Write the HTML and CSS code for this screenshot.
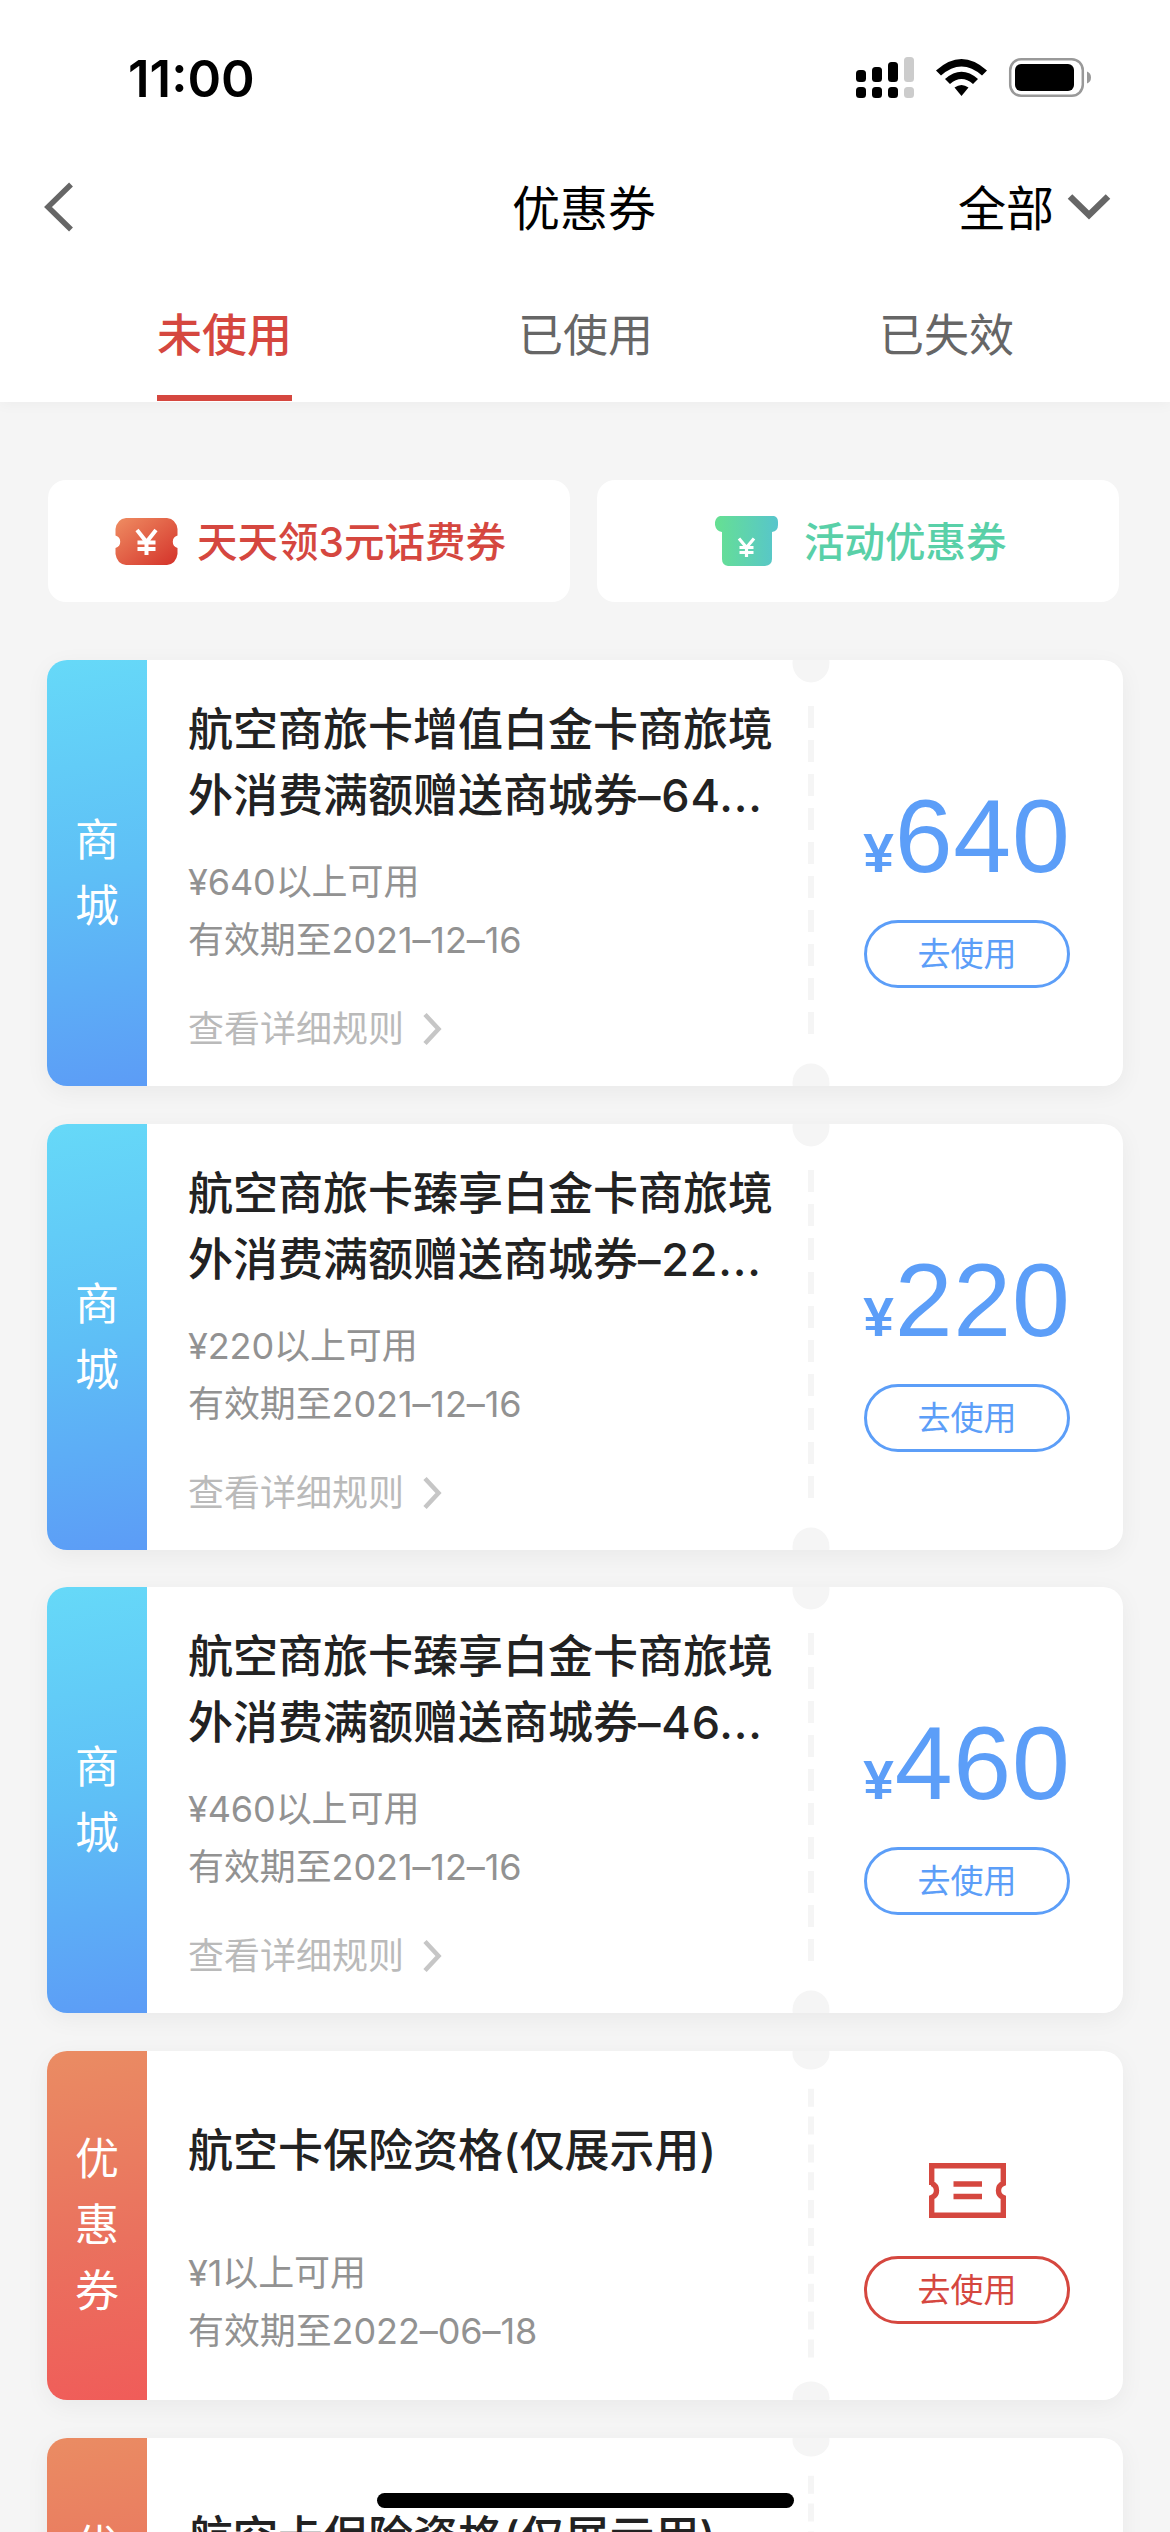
FILE: index.html
```html
<!DOCTYPE html>
<html lang="zh-CN">
<head>
<meta charset="utf-8">
<title>优惠券</title>
<link rel="stylesheet" href="styles.css">
</head>
<body>
<svg class="defs" width="0" height="0" aria-hidden="true">
  <defs>
    <symbol id="perforation" viewBox="0 0 38 426" preserveAspectRatio="none">
      <ellipse cx="19" cy="3" rx="18.5" ry="19.5" />
      <ellipse cx="19" cy="423" rx="18.5" ry="19.5" />
      <path d="M19 46V378" fill="none" stroke="#f5f5f5" stroke-width="6" stroke-dasharray="22 12" />
    </symbol>
    <symbol id="ticket" viewBox="0 0 77 55">
      <path d="M2.7 22V2.7H74.3V20.5A7.5 7.5 0 0 0 74.3 34.5V52.3H2.7V34.5A7.5 7.5 0 0 0 2.7 20.5Z" fill="none" stroke="#d5473f" stroke-width="5.4" />
      <path d="M24.500 21H53M24.500 33.500H53" stroke="#d5473f" stroke-width="5.400" />
    </symbol>
    <symbol id="more" viewBox="0 0 20 32">
      <path d="M2 1.500L15.500 16L2 30.500" fill="none" stroke="#c6c6c6" stroke-width="4.500" />
    </symbol>
  </defs>
</svg>

<header class="header">
  <div class="status">
    <span class="clock">11:00</span>
    <svg class="status-icons" width="240" height="44" viewBox="0 0 240 44">
      <g fill="#000">
        <rect x="1" y="14" width="10" height="12" rx="3.500"/><rect x="17" y="11" width="10" height="15" rx="3.500"/><rect x="33" y="6" width="10" height="20" rx="3.500"/>
        <rect x="1" y="31" width="10" height="11" rx="3.500"/><rect x="17" y="31" width="10" height="11" rx="3.500"/><rect x="33" y="31" width="10" height="11" rx="3.500"/>
      </g>
      <g fill="#ccc"><rect x="49" y="1" width="10" height="25" rx="3.500"/><rect x="49" y="31" width="10" height="11" rx="3.500"/></g>
      <g fill="#000">
        <path d="M81 14.500Q106.500 -8.500 132 14.500L127 19.500Q106.500 1.500 86 19.500Z"/>
        <path d="M90 23Q106.500 8.500 123 23L118 28Q106.500 18 95 28Z"/>
        <path d="M99.500 31.500Q106.500 26.500 113.500 31.500L106.500 40Z"/>
      </g>
      <rect x="155.200" y="3.200" width="72.600" height="36.600" rx="11" fill="#fff" stroke="#999" stroke-width="2.500"/>
      <rect x="160" y="8" width="59" height="27" rx="6" fill="#000"/>
      <path d="M232 15.500Q236 17 236 21.500T232 27.500Z" fill="#999"/>
    </svg>
  </div>
  <nav class="navbar">
    <svg class="back" width="30" height="50" viewBox="0 0 30 50"><path d="M27 2.500L4 25L27 47.500" fill="none" stroke="#666" stroke-width="5.500"/></svg>
    <h1 class="title">优惠券</h1>
    <div class="filter"><span>全部</span><svg width="44" height="28" viewBox="0 0 44 28"><path d="M3 3.500L22 22L41 3.500" fill="none" stroke="#666" stroke-width="6.500"/></svg></div>
  </nav>
  <div class="tabs">
    <div class="tab active">未使用</div>
    <div class="tab">已使用</div>
    <div class="tab">已失效</div>
  </div>
</header>

<main class="content">
  <section class="entries">
    <div class="entry red">
      <svg width="64" height="47" viewBox="0 0 64 47">
        <defs><linearGradient id="redfill" x1="0" y1="0" x2="1" y2="1"><stop offset="0" stop-color="#ef8d62"/><stop offset="1" stop-color="#d4322a"/></linearGradient></defs>
        <path d="M11 0H52Q61 1 62.500 11V17.500A6.500 6.500 0 0 0 62.500 30V36Q61 46 52 47H11Q2 46 .5 36V30A6.500 6.500 0 0 0 .5 17.500V11Q2 1 11 0Z" fill="url(#redfill)"/>
        <path d="M22 12L31.500 24L41 12M31.500 24V37M22.500 24.500H40.500M22.500 31H40.500" fill="none" stroke="#fff" stroke-width="4"/>
      </svg>
      <span>天天领3元话费券</span>
    </div>
    <div class="entry green">
      <svg width="64" height="50" viewBox="0 0 64 50">
        <defs><linearGradient id="greenfill"><stop offset="0" stop-color="#66e092"/><stop offset="1" stop-color="#57c5cc"/></linearGradient></defs>
        <path d="M5 0H59Q63 1 63 6V9Q63 15 57 16V43Q57 49 50 50H13Q7 49 7 43V16Q1 15 0 9V6Q1 1 5 0Z" fill="url(#greenfill)"/>
        <path d="M24 22.500L31.500 31.500L39 22.500M31.500 31V41M24.500 31.500H38.500M24.500 36.500H38.500" fill="none" stroke="#fff" stroke-width="3.200"/>
      </svg>
      <span>活动优惠券</span>
    </div>
  </section>

  <section class="coupons">
    <article class="coupon mall">
      <div class="kind"><span>商城</span></div>
      <div class="body">
        <h2 class="name"><span>航空商旅卡增值白金卡商旅境外消费满额赠送商城券<span class="tail">–64...</span></span></h2>
        <div class="info"><p>¥640以上可用</p><p>有效期至2021–12–16</p></div>
        <div class="rules">查看详细规则<svg width="20" height="32"><use href="#more"/></svg></div>
      </div>
      <svg class="perforation"><use href="#perforation"/></svg>
      <div class="action"><div class="price"><small>¥</small>640</div><button class="use">去使用</button></div>
    </article>
    <article class="coupon mall">
      <div class="kind"><span>商城</span></div>
      <div class="body">
        <h2 class="name"><span>航空商旅卡臻享白金卡商旅境外消费满额赠送商城券<span class="tail">–22...</span></span></h2>
        <div class="info"><p>¥220以上可用</p><p>有效期至2021–12–16</p></div>
        <div class="rules">查看详细规则<svg width="20" height="32"><use href="#more"/></svg></div>
      </div>
      <svg class="perforation"><use href="#perforation"/></svg>
      <div class="action"><div class="price"><small>¥</small>220</div><button class="use">去使用</button></div>
    </article>
    <article class="coupon mall">
      <div class="kind"><span>商城</span></div>
      <div class="body">
        <h2 class="name"><span>航空商旅卡臻享白金卡商旅境外消费满额赠送商城券<span class="tail">–46...</span></span></h2>
        <div class="info"><p>¥460以上可用</p><p>有效期至2021–12–16</p></div>
        <div class="rules">查看详细规则<svg width="20" height="32"><use href="#more"/></svg></div>
      </div>
      <svg class="perforation"><use href="#perforation"/></svg>
      <div class="action"><div class="price"><small>¥</small>460</div><button class="use">去使用</button></div>
    </article>
    <article class="coupon voucher">
      <div class="kind"><span>优惠券</span></div>
      <div class="body">
        <h2 class="name">航空卡保险资格(仅展示用)</h2>
        <div class="info"><p>¥1以上可用</p><p>有效期至2022–06–18</p></div>
      </div>
      <svg class="perforation"><use href="#perforation"/></svg>
      <div class="action"><svg class="ticket" width="77" height="55"><use href="#ticket"/></svg><button class="use">去使用</button></div>
    </article>
    <article class="coupon voucher">
      <div class="kind"><span>优惠券</span></div>
      <div class="body">
        <h2 class="name">航空卡保险资格(仅展示用)</h2>
      </div>
      <svg class="perforation"><use href="#perforation"/></svg>
      <div class="action"></div>
    </article>
  </section>
</main>
<div class="home-indicator"></div>
</body>
</html>
```
FILE: styles.css
```css
* { box-sizing: border-box; }

body {
  margin: 0;
  width: 1170px;
  height: 2532px;
  overflow: hidden;
  background: #f5f5f5;
  color: #222;
  font-family: Inter, "Noto Sans CJK SC", sans-serif;
}

h1, h2, p { margin: 0; font-weight: inherit; }
svg { display: block; flex: none; }
.defs { position: absolute; }

.header {
  height: 402px;
  background: #fff;
  box-shadow: 0 2px 14px rgba(0, 0, 0, .04);
}

.status {
  height: 156px;
  padding: 0 75px 0 128px;
  display: flex;
  align-items: center;
  justify-content: space-between;
}
.clock { font-size: 51px; font-weight: 600; color: #000; }

.navbar {
  height: 102px;
  padding: 0 59px 0 44px;
  display: grid;
  grid-template-columns: 468px 144px 1fr;
  align-items: center;
  color: #000;
  font-size: 48px;
}
.title { font-size: 48px; white-space: nowrap; padding-bottom: 5px; }
.filter { display: flex; align-items: center; justify-content: flex-end; gap: 13px; }
.filter span { padding-bottom: 5px; }

.tabs {
  height: 144px;
  padding-left: 44px;
  display: grid;
  grid-template-columns: repeat(3, 361px);
  justify-items: center;
  font-size: 45px;
  color: #666;
}
.tab { height: 143px; line-height: 155px; }
.tab.active { color: #d5473f; font-weight: 500; border-bottom: 6px solid #d5473f; }

.content { padding: 78px 47px 0; }

.entries { display: grid; grid-template-columns: 522px 522px; gap: 27px; padding-left: 1px; }
.entry {
  height: 122px;
  border-radius: 18px;
  background: #fff;
  display: flex;
  align-items: center;
  font-size: 40.5px;
  font-weight: 500;
  white-space: nowrap;
}
.entry span { padding-bottom: 4px; }
.entry.red { color: #d5473f; padding-left: 67px; gap: 18px; }
.entry.green { color: #59d0a8; padding-left: 118px; gap: 25px; }

.coupons { margin-top: 58px; display: grid; gap: 37.67px; }

.coupon {
  width: 1076px;
  height: 426px;
  border-radius: 20px;
  overflow: hidden;
  background: #fff;
  box-shadow: 0 6px 24px rgba(0, 0, 0, .05);
  display: flex;
}
.coupon.voucher { height: 349px; }

.kind {
  width: 100px;
  display: flex;
  align-items: center;
  justify-content: center;
  color: #fff;
  font-size: 44px;
  font-weight: 400;
  line-height: 66px;
}
.kind span { width: 44px; word-break: break-all; }
.mall .kind { background: linear-gradient(170deg, #66d9f8, #5ebff6 50%, #5c9cf6); }
.voucher .kind { background: linear-gradient(170deg, #ea8c63, #ea715e 55%, #f05c59); }

.body { width: 645px; padding: 37px 0 0 41px; }
.name {
  width: 590px;
  height: 132px;
  display: flex;
  align-items: center;
  font-size: 45px;
  font-weight: 500;
  line-height: 66px;
}
.tail { letter-spacing: .8px; }
.voucher .name { padding-bottom: 6px; }
.info { margin-top: 24px; font-size: 36px; line-height: 58px; font-weight: 400; color: #929292; letter-spacing: -.1px; }
.rules { margin-top: 31px; display: flex; align-items: center; gap: 19px; font-size: 36px; line-height: 58px; font-weight: 400; color: #bababa; }

.perforation { width: 38px; height: 100%; fill: #f5f5f5; }

.action {
  width: 274px;
  display: flex;
  flex-direction: column;
  align-items: center;
}
.price {
  height: 260px;
  padding-top: 116px;
  line-height: 120px;
  font-family: "Liberation Sans", sans-serif;
  font-size: 104px;
  letter-spacing: .8px;
  color: #5c9ef8;
  white-space: nowrap;
}
.price small { font-size: 55px; font-weight: 700; }
.ticket { margin: 112px 0 38px; }
.use {
  width: 206px;
  height: 68px;
  padding: 0;
  border: 3px solid #5c9ef8;
  border-radius: 34px;
  background: none;
  color: #5c9ef8;
  font: 400 33px/60px Inter, "Noto Sans CJK SC", sans-serif;
}
.voucher .use { border-color: #d5473f; color: #d5473f; }

.home-indicator {
  position: absolute;
  left: 377px;
  top: 2493px;
  width: 417px;
  height: 15px;
  border-radius: 8px;
  background: #000;
}
```
